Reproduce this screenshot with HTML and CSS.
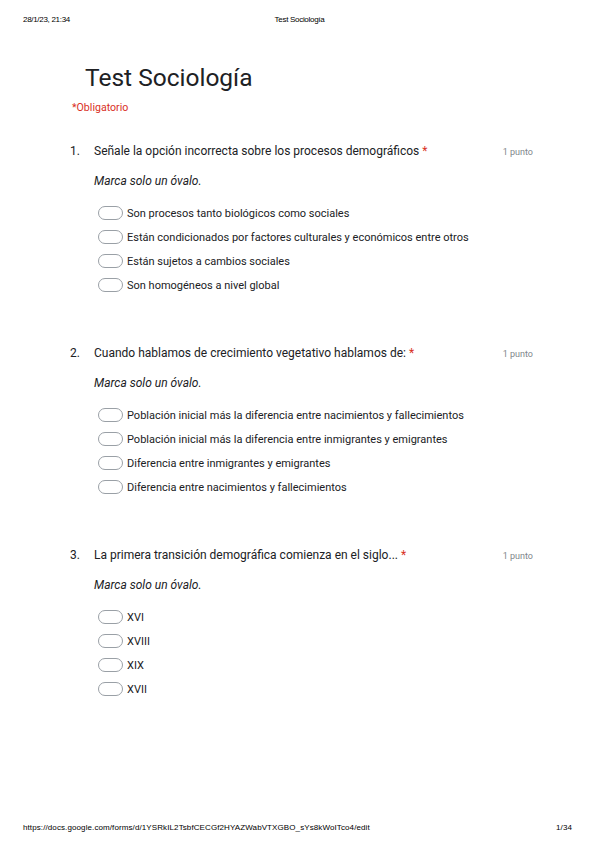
FILE: index.html
```html
<!DOCTYPE html>
<html lang="es">
  <head>
    <meta charset="UTF-8" />
    <meta name="viewport" content="width=device-width, initial-scale=1.0" />
    <title>Test Sociología</title>
    <link rel="stylesheet" href="styles.css">
  </head>
  <body>
    <div class="print-head">
      <span>28/1/23, 21:34</span>
      <span class="center">Test Sociología</span>
      <span></span>
    </div>

    <div class="form">
      <h1 class="title">Test Sociología</h1>
      <div class="required">*Obligatorio</div>

      <div class="question">
        <div class="q-head">
          <span class="num">1.</span>
          <span class="q-text">Señale la opción incorrecta sobre los procesos demográficos <span class="star">*</span></span>
          <span class="points">1 punto</span>
        </div>
        <div class="hint">Marca solo un óvalo.</div>
        <ul class="options">
          <li><span class="oval"></span>Son procesos tanto biológicos como sociales</li>
          <li><span class="oval"></span>Están condicionados por factores culturales y económicos entre otros</li>
          <li><span class="oval"></span>Están sujetos a cambios sociales</li>
          <li><span class="oval"></span>Son homogéneos a nivel global</li>
        </ul>
      </div>

      <div class="question">
        <div class="q-head">
          <span class="num">2.</span>
          <span class="q-text">Cuando hablamos de crecimiento vegetativo hablamos de: <span class="star">*</span></span>
          <span class="points">1 punto</span>
        </div>
        <div class="hint">Marca solo un óvalo.</div>
        <ul class="options">
          <li><span class="oval"></span>Población inicial más la diferencia entre nacimientos y fallecimientos</li>
          <li><span class="oval"></span>Población inicial más la diferencia entre inmigrantes y emigrantes</li>
          <li><span class="oval"></span>Diferencia entre inmigrantes y emigrantes</li>
          <li><span class="oval"></span>Diferencia entre nacimientos y fallecimientos</li>
        </ul>
      </div>

      <div class="question">
        <div class="q-head">
          <span class="num">3.</span>
          <span class="q-text">La primera transición demográfica comienza en el siglo... <span class="star">*</span></span>
          <span class="points">1 punto</span>
        </div>
        <div class="hint">Marca solo un óvalo.</div>
        <ul class="options">
          <li><span class="oval"></span>XVI</li>
          <li><span class="oval"></span>XVIII</li>
          <li><span class="oval"></span>XIX</li>
          <li><span class="oval"></span>XVII</li>
        </ul>
      </div>
    </div>

    <div class="print-foot">
      <span>https://docs.google.com/forms/d/1YSRkIL2TsbfCECGf2HYAZWabVTXGBO_sYs8kWoITco4/edit</span>
      <span>1/34</span>
    </div>
  </body>
</html>
```

FILE: styles.css
```css
body {
  margin: 0;
  width: 599px;
  height: 848px;
  position: relative;
  font-family: Roboto, "Liberation Sans", sans-serif;
  color: #202124;
  background: #fff;
}

.print-head {
  display: grid;
  grid-template-columns: 1fr auto 1fr;
  padding: 14px 23px 0 23px;
  font-family: "Liberation Sans", Arial, sans-serif;
  font-size: 8px;
  letter-spacing: -0.3px;
  line-height: 12px;
  color: #000;
}

.print-head .center {
  text-align: center;
}

.form {
  padding: 0 0 0 70px;
  width: 463px;
}

.title {
  margin: 36px 0 0 15px;
  font-size: 24.5px;
  font-weight: 400;
  line-height: 32px;
  color: #202124;
}

.required {
  margin: 7px 0 0 2px;
  font-size: 10.6px;
  line-height: 14px;
  color: #d93025;
}

.question {
  margin-top: 28px;
  height: 174px;
}

.q-head {
  display: flex;
  align-items: baseline;
  font-size: 12px;
  line-height: 16px;
}

.num {
  width: 24px;
}

.q-text {
  flex: 1;
}

.star {
  color: #d93025;
}

.points {
  font-size: 9px;
  color: #80868b;
}

.hint {
  margin: 13px 0 0 24px;
  font-size: 12px;
  font-style: italic;
  line-height: 16px;
}

.options {
  list-style: none;
  margin: 12px 0 0 28px;
  padding: 0;
}

.options li {
  display: flex;
  align-items: center;
  height: 24px;
  font-size: 11px;
}

.oval {
  width: 23px;
  height: 12px;
  border: 1px solid #9aa0a6;
  border-radius: 7px;
  margin-right: 4px;
}

.print-foot {
  position: absolute;
  left: 23px;
  right: 27px;
  top: 822px;
  display: flex;
  justify-content: space-between;
  font-family: "Liberation Sans", Arial, sans-serif;
  font-size: 8px;
  letter-spacing: 0.1px;
  line-height: 12px;
  color: #000;
}
```
